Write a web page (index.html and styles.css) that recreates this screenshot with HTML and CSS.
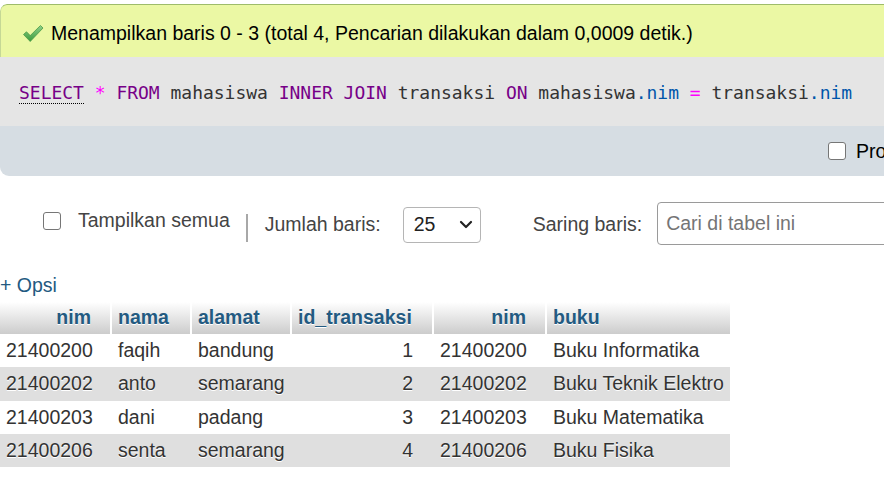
FILE: index.html
```html
<!DOCTYPE html>
<html lang="id">
<head>
<meta charset="utf-8">
<title>phpMyAdmin - hasil query</title>
<link rel="stylesheet" href="styles.css">
</head>
<body>
<div class="page">
  <div class="result">
    <div class="success">
      <svg class="check" width="22" height="19" viewBox="0 0 22 19" aria-hidden="true">
        <defs>
          <linearGradient id="g" x1="0" y1="0" x2="0" y2="1">
            <stop offset="0" stop-color="#8fd18a"/>
            <stop offset="1" stop-color="#3c9a3c"/>
          </linearGradient>
        </defs>
        <path d="M1.5 10.5 L4.5 7.8 L8.2 11.6 L18.5 1.5 L21 4 L8.2 17.5 Z" fill="url(#g)" stroke="#4a9a47" stroke-width="0.8" stroke-linejoin="round"/>
      </svg>
      <span>Menampilkan baris 0 - 3 (total 4, Pencarian dilakukan dalam 0,0009 detik.)</span>
    </div>
    <div class="sql">
      <code><span class="kw doc">SELECT</span> <span class="op">*</span> <span class="kw">FROM</span> mahasiswa <span class="kw">INNER JOIN</span> transaksi <span class="kw">ON</span> mahasiswa<span class="var">.nim</span> <span class="op">=</span> transaksi<span class="var">.nim</span></code>
    </div>
    <div class="tools">
      <label class="profiling"><input type="checkbox" class="cb"> <span>Profiling</span></label>
    </div>
  </div>

  <div class="navbar">
    <label class="showall"><input type="checkbox" class="cb"><span>Tampilkan semua</span></label>
    <span class="sep"></span>
    <span class="lbl">Jumlah baris:</span>
    <div class="select"><span>25</span>
      <svg width="14" height="9" viewBox="0 0 14 9" aria-hidden="true"><path d="M2 2 L7 7 L12 2" fill="none" stroke="#222" stroke-width="2.2" stroke-linecap="round" stroke-linejoin="round"/></svg>
    </div>
    <span class="lbl filter">Saring baris:</span>
    <div class="search">Cari di tabel ini</div>
  </div>

  <div class="opsi">+ Opsi</div>

  <table class="data">
    <colgroup>
      <col style="width:112px"><col style="width:80px"><col style="width:100px"><col style="width:142px"><col style="width:113px"><col style="width:183px">
    </colgroup>
    <thead>
      <tr><th class="num">nim</th><th>nama</th><th>alamat</th><th>id_transaksi</th><th class="num">nim</th><th class="last">buku</th></tr>
    </thead>
    <tbody>
      <tr><td class="num">21400200</td><td>faqih</td><td>bandung</td><td class="num">1</td><td class="num">21400200</td><td>Buku Informatika</td></tr>
      <tr><td class="num">21400202</td><td>anto</td><td>semarang</td><td class="num">2</td><td class="num">21400202</td><td>Buku Teknik Elektro</td></tr>
      <tr><td class="num">21400203</td><td>dani</td><td>padang</td><td class="num">3</td><td class="num">21400203</td><td>Buku Matematika</td></tr>
      <tr><td class="num">21400206</td><td>senta</td><td>semarang</td><td class="num">4</td><td class="num">21400206</td><td>Buku Fisika</td></tr>
    </tbody>
  </table>
</div>
</body>
</html>
```
FILE: styles.css
```css
html, body {
  margin: 0;
  padding: 0;
  overflow: hidden;
  background: #fff;
}
body {
  width: 884px;
  height: 482px;
  font-family: "Liberation Sans", Arial, sans-serif;
  font-size: 19.5px;
  color: #444;
}
.page {
  width: 884px;
  overflow: hidden;
  padding-top: 4px;
}
.result {
  width: 1000px;
  border-radius: 7px 0 0 9px;
  overflow: hidden;
}
.success {
  display: flex;
  align-items: center;
  height: 53px;
  box-sizing: border-box;
  padding-left: 21px;
  padding-top: 5px;
  gap: 7px;
  background: #ebf8a4;
  border-top: 1px solid #9ebc6a;
  border-left: 1px solid #c5d895;
  border-radius: 7px 0 0 0;
  color: #000;
}
.check { flex: none; }
.sql {
  display: flex;
  align-items: center;
  height: 69px;
  padding-left: 19px;
  padding-top: 1px;
  box-sizing: border-box;
  background: #e5e5e5;
}
.sql code {
  font-family: "DejaVu Sans Mono", "Liberation Mono", monospace;
  font-size: 17.98px;
  color: #333;
  white-space: pre;
}
.kw { color: #770088; }
.doc { border-bottom: 1px dotted #000; }
.op { color: #ff00ff; }
.var { color: #0055aa; }
.tools {
  display: flex;
  align-items: center;
  height: 50px;
  padding-left: 828px;
  background: #d6dde3;
  color: #000;
}
.profiling {
  display: flex;
  align-items: center;
  gap: 10px;
  white-space: nowrap;
  flex: none;
}
.cb {
  appearance: none;
  -webkit-appearance: none;
  margin: 0;
  width: 18px;
  height: 18px;
  box-sizing: border-box;
  border: 1.5px solid #767676;
  border-radius: 3px;
  background: #fff;
  flex: none;
}
.navbar {
  display: flex;
  align-items: center;
  height: 43px;
  margin-top: 26px;
  padding-left: 43px;
  white-space: nowrap;
}
.navbar > * { flex: none; }
.showall {
  display: flex;
  align-items: center;
  gap: 17px;
  margin-bottom: 6px;
}
.sep {
  display: block;
  width: 2px;
  height: 28px;
  background: #a8a8a8;
  margin-left: 16px;
  margin-top: 8px;
}
.lbl { margin-left: 17px; margin-top: 2px; }
.select {
  display: flex;
  align-items: center;
  justify-content: space-between;
  box-sizing: border-box;
  width: 78px;
  height: 36px;
  margin-left: 22px;
  margin-top: 2px;
  padding: 0 7px 0 10px;
  border: 1px solid #b5b5b5;
  border-radius: 4px;
  color: #222;
}
.lbl.filter { margin-left: 52px; }
.search {
  box-sizing: border-box;
  width: 260px;
  height: 43px;
  margin-left: 15px;
  padding: 9px 8px;
  border: 1px solid #9a9a9a;
  border-radius: 4px;
  color: #757575;
  line-height: 23px;
}
.opsi {
  margin-top: 29px;
  line-height: 22px;
  color: #235a81;
}
table.data {
  margin-top: 6px;
  border-collapse: separate;
  border-spacing: 0;
  table-layout: fixed;
  width: 730px;
  text-shadow: 0 1px 0 #fff;
}
.data th {
  padding: 4px 6px 5px;
  line-height: 23px;
  text-align: left;
  font-weight: bold;
  color: #235a81;
  background: linear-gradient(#ffffff, #cccccc);
  border-right: 2px solid #fff;
  white-space: nowrap;
}
.data th.last { border-right: 0; }
.data th.num { text-align: right; padding-right: 19px; }
.data td {
  padding: 5px 6px;
  line-height: 23.3px;
  white-space: nowrap;
  color: #333;
}
.data td.num { text-align: right; padding-right: 21px; }
.data tbody tr:nth-child(even) td { background: #dfdfdf; }
```
